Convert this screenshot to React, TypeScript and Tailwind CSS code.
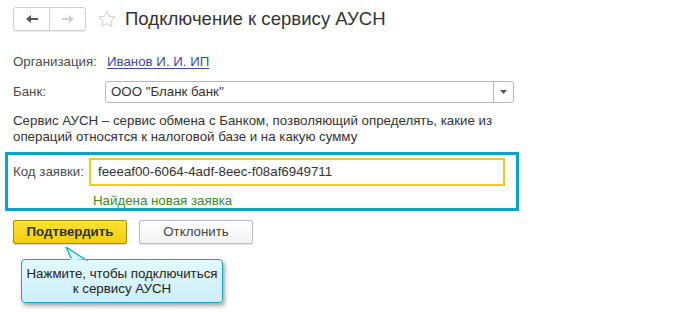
function NavButtons() {
  return (
    <div className="flex h-[24px] w-[73px] rounded-[3px] border border-[#cfcfcf] bg-white shadow-[0_1px_1px_rgba(0,0,0,0.08)]">
      <div className="flex w-[36px] items-center justify-center border-r border-[#cfcfcf]">
        <svg width="12" height="10" viewBox="0 0 12 10">
          <path d="M0 5 L5 1 L5 4 L12 4 L12 6 L5 6 L5 9 Z" fill="#555" />
        </svg>
      </div>
      <div className="flex flex-1 items-center justify-center">
        <svg width="12" height="10" viewBox="0 0 12 10">
          <path d="M12 5 L7 1 L7 4 L0 4 L0 6 L7 6 L7 9 Z" fill="#d0d0d0" />
        </svg>
      </div>
    </div>
  )
}

function Star() {
  return (
    <svg width="20" height="20" viewBox="0 0 24 24" className="ml-[11px]">
      <path
        d="M12 2.5l2.9 6.3 6.9.7-5.2 4.6 1.5 6.8L12 17.4l-6.1 3.5 1.5-6.8-5.2-4.6 6.9-.7z"
        fill="none"
        stroke="#cfcfcf"
        strokeWidth="1.2"
        strokeLinejoin="round"
      />
    </svg>
  )
}

export default function App() {
  return (
    <div className="h-[312px] w-[700px] overflow-hidden bg-white font-['Liberation_Sans',Arial,sans-serif] text-[13.3px] text-[#333]">
      {/* Header */}
      <div className="mt-[7px] flex h-[24px] items-center pl-[13px]">
        <NavButtons />
        <Star />
        <h1 className="ml-[8px] text-[18.6px] leading-[24px] text-[#333]">Подключение к сервису АУСН</h1>
      </div>

      <div className="pl-[13px]">
        {/* Организация */}
        <div className="mt-[21px] flex h-[20px] items-center">
          <span className="w-[94px] text-[#4d4d4d]">Организация:</span>
          <a className="text-[#3c4aa6] underline underline-offset-2">Иванов И. И. ИП</a>
        </div>

        {/* Банк */}
        <div className="mt-[9px] flex h-[22px] items-center">
          <span className="w-[92px] text-[#4d4d4d]">Банк:</span>
          <div className="flex h-[22px] w-[409px] rounded-[3px] border border-[#b8b8b8]">
            <div className="flex flex-1 items-center pl-[5px] text-[#333]">ООО "Бланк банк"</div>
            <div className="flex w-[20px] items-center justify-center border-l border-[#b8b8b8]">
              <svg width="7" height="4" viewBox="0 0 7 4">
                <path d="M0 0 L7 0 L3.5 4 Z" fill="#555" />
              </svg>
            </div>
          </div>
        </div>

        {/* Описание */}
        <p className="mt-[10px] w-[500px] leading-[16px] text-[#333]">
          Сервис АУСН – сервис обмена с Банком, позволяющий определять, какие из операций относятся к налоговой базе и на какую сумму
        </p>
      </div>

      {/* Код заявки */}
      <div className="ml-[5px] mt-[7px] h-[59px] w-[514px] border-[3px] border-[#0ba4c3] pl-[5px]">
        <div className="mt-[3px] flex items-center">
          <span className="w-[76px] text-[#4d4d4d]">Код заявки:</span>
          <div className="flex h-[28px] w-[416px] items-center border-2 border-[#f7c61f] pl-[7px] text-[#333]">
            feeeaf00-6064-4adf-8eec-f08af6949711
          </div>
        </div>
        <div className="ml-[80px] mt-[8px] leading-[14px] text-[#3a8d22]">Найдена новая заявка</div>
      </div>

      {/* Кнопки */}
      <div className="ml-[13px] mt-[9px] flex gap-[12px]">
        <button className="h-[24px] w-[114px] rounded-[2px] border border-[#a68f00] bg-gradient-to-b from-[#fde233] to-[#f2cf00] font-bold text-[#333] shadow-[0_1px_1px_rgba(0,0,0,0.15)]">
          Подтвердить
        </button>
        <button className="h-[24px] w-[114px] rounded-[2px] border border-[#bdbdbd] bg-gradient-to-b from-white to-[#f2f2f2] text-[#444] shadow-[0_1px_1px_rgba(0,0,0,0.1)]">
          Отклонить
        </button>
      </div>

      {/* Подсказка */}
      <div className="relative ml-[21px] mt-[15px] w-[202px]">
        <svg width="24" height="14" viewBox="0 0 24 14" className="absolute left-[43px] top-[-12px] z-10">
          <path d="M2 0 L8 13 L22 13 Z" fill="#d7f4fb" stroke="#19a5c4" strokeWidth="1.3" />
          <path d="M6 11.4 L8.5 13.5 L22.5 13.5" fill="#d7f4fb" stroke="#d7f4fb" strokeWidth="1.6" />
        </svg>
        <div className="rounded-[4px] border border-[#19a5c4] bg-gradient-to-b from-[#e3f8fd] to-[#ccf0f9] px-[4px] pt-[6px] pb-[6px] text-center leading-[15px] text-[#222] shadow-[2px_3px_4px_rgba(0,0,0,0.35)]">
          Нажмите, чтобы подключиться
          <br />к сервису АУСН
        </div>
      </div>
    </div>
  )
}
